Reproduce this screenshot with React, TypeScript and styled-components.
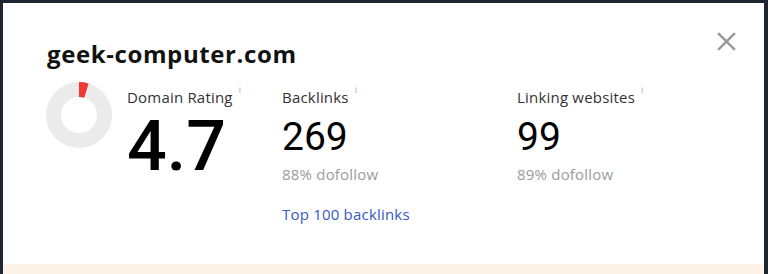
import React from 'react'
import styled, { createGlobalStyle } from 'styled-components'

const GlobalStyle = createGlobalStyle`
  html, body {
    margin: 0;
    padding: 0;
    background: #1e2631;
  }
  body {
    font-family: 'Open Sans', 'Noto Sans', sans-serif;
  }
`

const Page = styled.div`
  width: 768px;
  height: 274px;
  padding: 3px 4px 0 3px;
  box-sizing: border-box;
  overflow: hidden;
`

const Modal = styled.section`
  position: relative;
  background: #fff;
  height: 100%;
  display: flex;
  flex-direction: column;
`

const Body = styled.div`
  flex: 1;
  padding: 36px 0 0 44px;
`

const Footer = styled.div`
  height: 10px;
  background: #fdf3e8;
`

const Title = styled.h1`
  margin: 0;
  font-size: 24px;
  font-weight: 700;
  color: #111;
  line-height: 30px;
  letter-spacing: 0.6px;
`

const Close = styled.button`
  position: absolute;
  top: 26px;
  right: 26px;
  width: 24px;
  height: 24px;
  padding: 0;
  border: 0;
  background: none;
  cursor: pointer;
  display: flex;
  align-items: center;
  justify-content: center;
`

const Stats = styled.div`
  display: flex;
  margin-top: 11px;
`

const Donut = styled.svg`
  flex: none;
  margin-top: 2px;
  margin-left: -1px;
  margin-right: 15px;
`

const Column = styled.div<{ $width?: number }>`
  width: ${(p) => (p.$width ? `${p.$width}px` : 'auto')};
  padding-top: 7px;
  display: flex;
  flex-direction: column;
`

const Label = styled.div`
  font-size: 15px;
  color: #333;
  line-height: 20px;
  height: 20px;
  letter-spacing: 0.2px;
`

const Info = styled.sup`
  font-size: 9px;
  color: #aaa;
  margin-left: 6px;
  vertical-align: 10px;
  line-height: 0;
`

const BigValue = styled.div`
  font-family: Roboto, 'Liberation Sans', sans-serif;
  font-size: 70px;
  font-weight: 500;
  line-height: 72px;
  color: #000;
  margin-top: 3px;
`

const Value = styled.div`
  font-family: Roboto, 'Liberation Sans', sans-serif;
  font-size: 39px;
  font-weight: 400;
  line-height: 44px;
  color: #000;
  margin-top: 8px;
`

const Sub = styled.div`
  font-size: 15px;
  color: #9b9b9b;
  line-height: 20px;
  margin-top: 5px;
  letter-spacing: 0.2px;
`

const Link = styled.a`
  font-size: 15px;
  color: #3559c7;
  line-height: 20px;
  margin-top: 20px;
  text-decoration: none;
  letter-spacing: 0.2px;
`

const rating = 4.7

function arc(r: number, pct: number) {
  const a = (pct / 100) * 2 * Math.PI
  const x = 33 + r * Math.sin(a)
  const y = 33 - r * Math.cos(a)
  return { x, y }
}

const RatingDonut = () => {
  const end = arc(25.5, rating)
  return (
    <Donut width="66" height="66" viewBox="0 0 66 66">
      <circle cx="33" cy="33" r="25.5" fill="none" stroke="#ebebec" strokeWidth="15" />
      <path
        d={`M33 7.5 A25.5 25.5 0 0 1 ${end.x.toFixed(2)} ${end.y.toFixed(2)}`}
        fill="none"
        stroke="#ee3a32"
        strokeWidth="15"
      />
    </Donut>
  )
}

export default function App() {
  return (
    <>
      <GlobalStyle />
      <Page>
        <Modal>
          <Body>
            <Title>geek-computer.com</Title>
            <Stats>
              <RatingDonut />
              <Column $width={155}>
                <Label>
                  Domain Rating<Info>i</Info>
                </Label>
                <BigValue>4.7</BigValue>
              </Column>
              <Column $width={235}>
                <Label>
                  Backlinks<Info>i</Info>
                </Label>
                <Value>269</Value>
                <Sub>88% dofollow</Sub>
                <Link href="#">Top 100 backlinks</Link>
              </Column>
              <Column>
                <Label>
                  Linking websites<Info>i</Info>
                </Label>
                <Value>99</Value>
                <Sub>89% dofollow</Sub>
              </Column>
            </Stats>
          </Body>
          <Footer />
          <Close aria-label="Close">
            <svg width="21" height="21" viewBox="0 0 20 20">
              <path d="M2 2 L18 18 M18 2 L2 18" stroke="#9a9a9a" strokeWidth="2.4" strokeLinecap="butt" />
            </svg>
          </Close>
        </Modal>
      </Page>
    </>
  )
}
